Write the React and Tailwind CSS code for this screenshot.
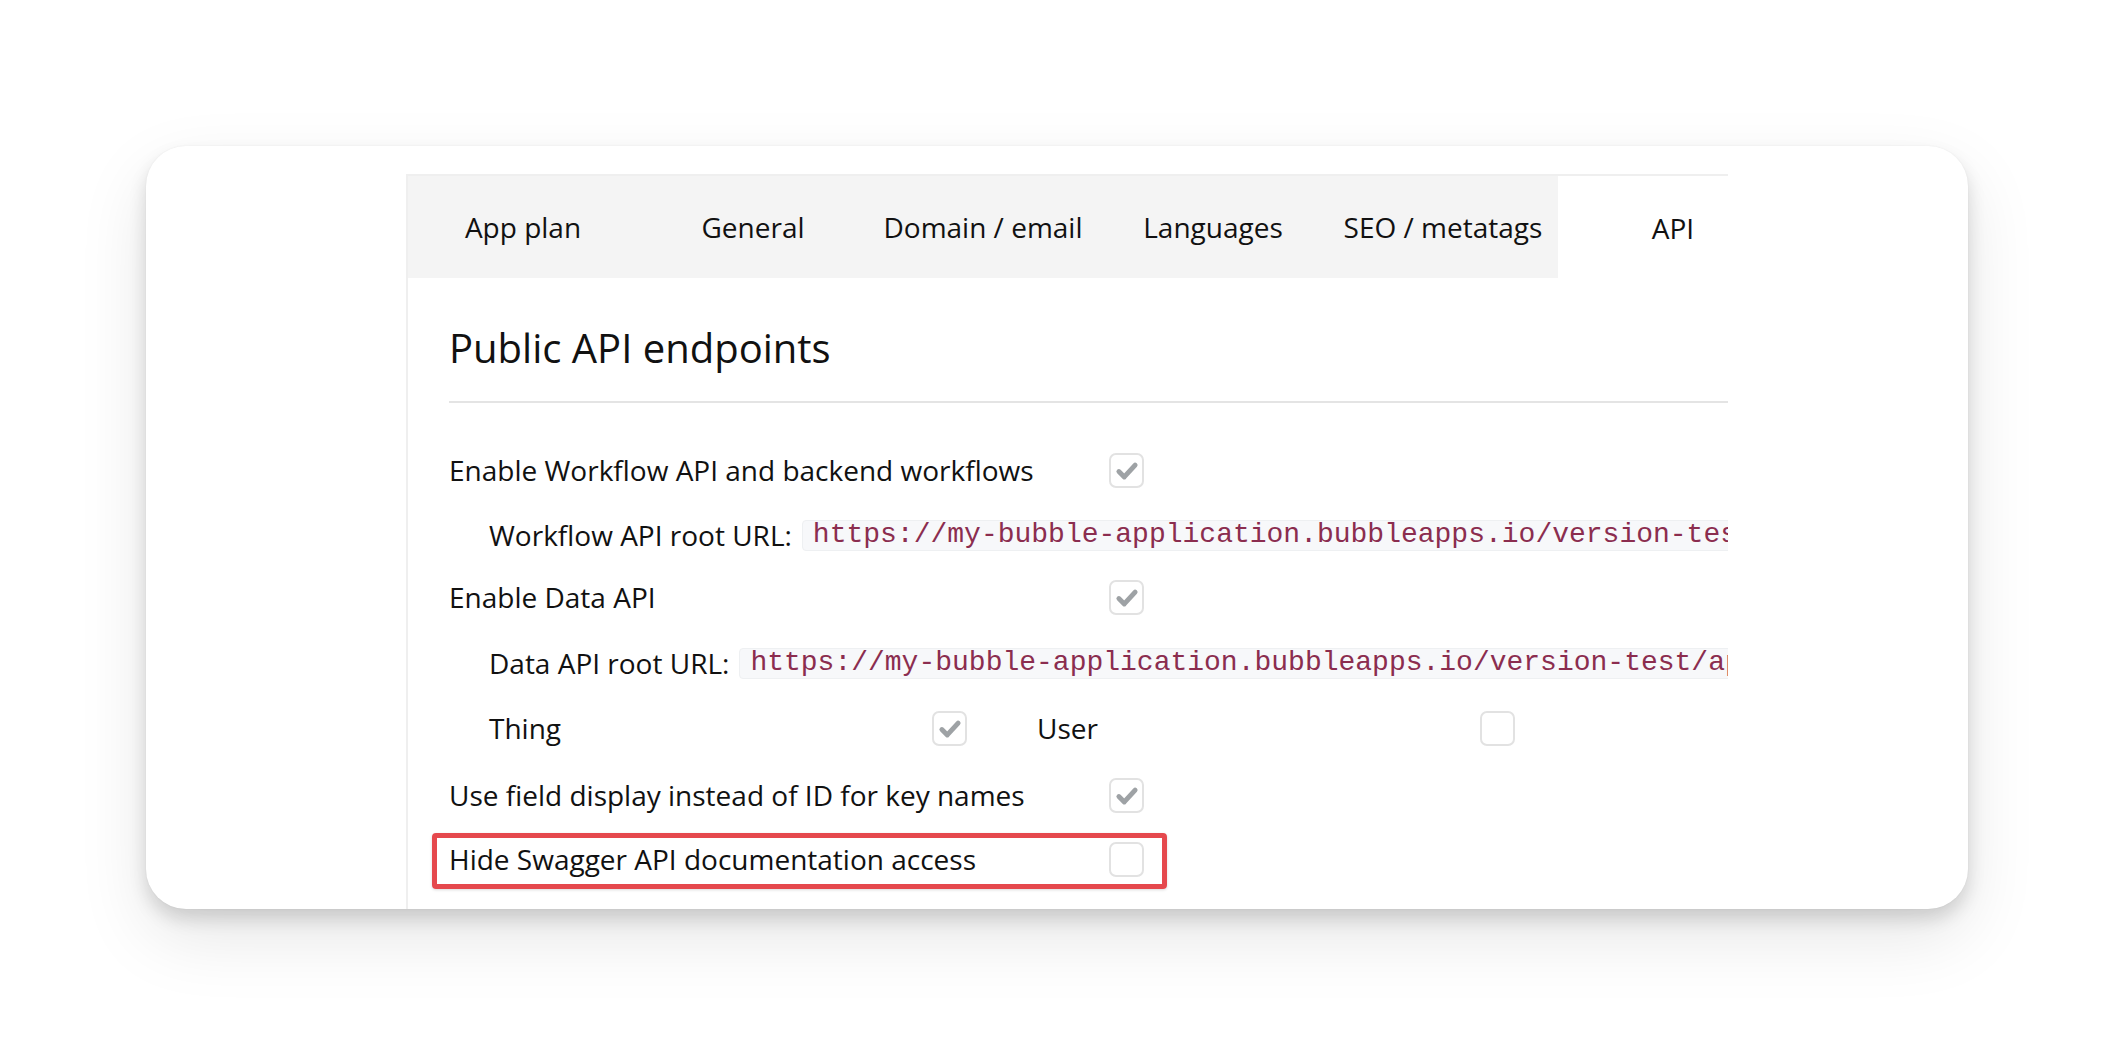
import React from 'react';

const tabs = ['App plan', 'General', 'Domain / email', 'Languages', 'SEO / metatags', 'API'];

const Check = ({ checked }) => (
  <span className="flex h-[35px] w-[35px] shrink-0 items-center justify-center rounded-[7px] border-2 border-[#e2e2e2] bg-white">
    {checked && (
      <svg viewBox="0 0 24 24" className="mt-[2px] h-[26px] w-[26px]" fill="none">
        <path d="M4.5 12.5l5 5L19.5 6.5" stroke="#9ea2a5" strokeWidth="4.5" strokeLinecap="round" strokeLinejoin="round" />
      </svg>
    )}
  </span>
);

const CodeBox = ({ children }) => (
  <span className="ml-[10px] flex h-[31px] shrink-0 items-center whitespace-nowrap rounded-[4px] border border-[#eef0f2] bg-[#f7f8fa] px-[10px] font-['Liberation_Mono',monospace] text-[28px] text-[#8b2d4f]">
    {children}
  </span>
);

const Row = ({ label, checked, className = '' }) => (
  <div className={`flex h-[40px] items-center ${className}`}>
    <span className="w-[660px] shrink-0 whitespace-nowrap">{label}</span>
    <Check checked={checked} />
  </div>
);

const App = () => {
  return (
    <div className="min-h-[1056px] bg-white px-[146px] pt-[146px] font-['Open_Sans',sans-serif] text-[#111]">
      <div className="h-[763px] overflow-hidden rounded-[40px] bg-white pl-[260px] pt-[28px] shadow-[0_0_2px_rgba(0,0,0,0.06),0_10px_18px_rgba(0,0,0,0.14),0_28px_70px_rgba(0,0,0,0.10)]">
        <div className="h-full w-[1322px] overflow-hidden border-l-2 border-t-2 border-[#efefef] bg-white">
          {/* tabs */}
          <div className="-mt-[2px] flex h-[104px]">
            {tabs.map((t) => (
              <div
                key={t}
                className={`flex w-[230px] shrink-0 items-center justify-center whitespace-nowrap pt-[2px] text-[28px] ${
                  t === 'API' ? 'mt-[2px] bg-white' : 'bg-[#f4f4f4]'
                }`}
              >
                {t}
              </div>
            ))}
            <div className="flex-1 bg-[#f4f4f4]" />
          </div>

          <div className="pl-[41px] text-[28px]">
            <h2 className="mt-[43px] h-[54px] whitespace-nowrap text-[40px] leading-[54px]">Public API endpoints</h2>
            <div className="mt-[26px] border-b-2 border-[#e4e4e4]" />

            <Row className="mt-[47px]" label="Enable Workflow API and backend workflows" checked />

            <div className="mt-[25px] flex h-[40px] items-center pl-[40px]">
              <span className="shrink-0 whitespace-nowrap">Workflow API root URL:</span>
              <CodeBox>https://my-bubble-application.bubbleapps.io/version-test/api/1.1/wf</CodeBox>
            </div>

            <Row className="mt-[22px]" label="Enable Data API" checked />

            <div className="mt-[26px] flex h-[40px] items-center pl-[40px]">
              <span className="shrink-0 whitespace-nowrap">Data API root URL:</span>
              <CodeBox>https://my-bubble-application.bubbleapps.io/version-test/api/1.1/obj</CodeBox>
            </div>

            <div className="mt-[25px] flex h-[40px] items-center pl-[40px]">
              <div className="flex w-[548px] shrink-0 items-center">
                <span className="w-[443px] shrink-0">Thing</span>
                <Check checked />
              </div>
              <div className="flex w-[548px] shrink-0 items-center">
                <span className="w-[443px] shrink-0">User</span>
                <Check />
              </div>
            </div>

            <Row className="mt-[27px]" label="Use field display instead of ID for key names" checked />

            <div className="relative mt-[24px]">
              <Row label="Hide Swagger API documentation access" />
              <span className="pointer-events-none absolute -left-[17px] -top-[6px] h-[56px] w-[735px] rounded-[4px] border-[5px] border-[#e5484d] shadow-[0_1px_3px_rgba(0,0,0,0.15)]" />
            </div>
          </div>
        </div>
      </div>
    </div>
  );
};

export default App;
